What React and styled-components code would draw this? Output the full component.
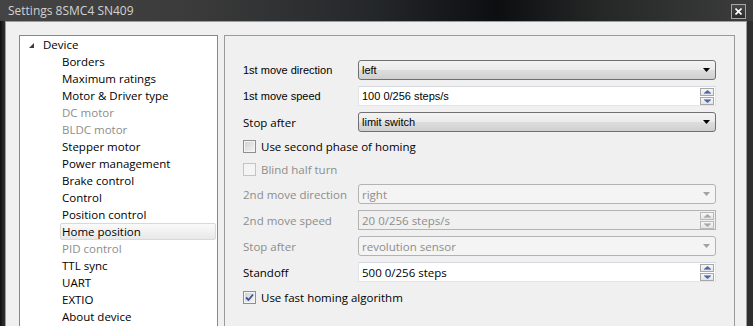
import React from 'react';
import styled, { createGlobalStyle, css } from 'styled-components';

const GlobalStyle = createGlobalStyle`
  html, body {
    margin: 0;
    padding: 0;
    background: #1c1c1c;
  }
  body {
    font-family: "Open Sans", "Noto Sans", sans-serif;
  }
`

const segoe = css`
  font-family: "Open Sans", "Noto Sans", sans-serif;
  font-size: 11.5px;
`

const tahoma = css`
  font-family: "Liberation Sans", Arial, sans-serif;
  font-size: 11px;
`

const Window = styled.div`
  width: 753px;
  height: 326px;
  overflow: hidden;
  display: flex;
  flex-direction: column;
  background: #2c2c2c;
`

const TitleBar = styled.div`
  flex: none;
  height: 21px;
  display: flex;
  align-items: center;
  justify-content: space-between;
  padding: 0 7px 0 8px;
  background: linear-gradient(90deg, #444 0%, #3b3b3b 25%, #24272a 50%, #0c0e10 66%, #262828 80%, #3c3c3c 100%);
  color: #d2d2d2;
  ${segoe};
  font-size: 12px;
`

const CloseButton = styled.div`
  width: 13px;
  height: 13px;
  margin-top: 2px;
  border: 1px solid #a6a6a6;
  background: linear-gradient(#4a4a4a, #2b2b2b);
  display: flex;
  align-items: center;
  justify-content: center;
`

const Frame = styled.div`
  flex: 1;
  min-height: 0;
  display: flex;
  padding: 0 6px 0 5px;
  background: linear-gradient(90deg, #0e0e0e 0px, #262626 3px, #2e2e2e 5px);
`

const Content = styled.div`
  flex: 1;
  min-height: 0;
  display: flex;
  gap: 6px;
  padding: 13px 0 0 13px;
  background: #f0f0f0;
  border: 1px solid #9c9c9c;
  border-bottom: none;
  overflow: hidden;
`

const Tree = styled.div`
  flex: none;
  width: 199px;
  height: 320px;
  box-sizing: border-box;
  border: 1px solid #828790;
  background: #fff;
  padding-right: 1px;
`

const TreeRow = styled.div`
  height: 17px;
  box-sizing: border-box;
  display: flex;
  align-items: center;
  margin-left: ${p => (p.$child ? '40px' : '7px')};
  padding-left: 1px;
  border: 1px solid transparent;
  border-radius: 2px;
  color: ${p => (p.$disabled ? '#8d8d8d' : '#000')};
  white-space: nowrap;
  ${segoe};
  ${p => p.$selected && css`
    border-color: #d9d9d9;
    background: linear-gradient(#fafafa, #e8e8e8);
  `}
`

const Expander = styled.svg`
  width: 5px;
  height: 5px;
  margin: 1px 9px 0 0;
`

const GroupBox = styled.div`
  flex: none;
  width: 511px;
  height: 320px;
  box-sizing: border-box;
  border: 1px solid #9a9a9a;
  padding: 24px 0 0 18px;
  display: flex;
  flex-direction: column;
`

const Field = styled.div`
  display: grid;
  grid-template-columns: 115px 358px;
  align-items: center;
  height: 20px;
  margin-bottom: 6px;
`

const Label = styled.span`
  ${p => (p.$small ? tahoma : segoe)};
  color: ${p => (p.$disabled ? '#8d8d8d' : '#000')};
  white-space: nowrap;
`

const Combo = styled.div`
  height: 20px;
  box-sizing: border-box;
  display: flex;
  align-items: center;
  justify-content: space-between;
  padding: 0 5px 0 3px;
  border-radius: 3px;
  border: 1px solid ${p => (p.$disabled ? '#b3b3b3' : '#707070')};
  background: ${p => (p.$disabled
    ? '#f4f4f4'
    : 'linear-gradient(#f3f3f3 0%, #ebebeb 48%, #dddddd 52%, #cfcfcf 100%)')};
`

const SpinBox = styled.div`
  height: 20px;
  box-sizing: border-box;
  display: flex;
  align-items: center;
  justify-content: space-between;
  padding: 0 1px 0 3px;
  border: 1px solid ${p => (p.$disabled ? '#b3b3b3' : '#e1e4e8')};
  border-top-color: ${p => (p.$disabled ? '#b3b3b3' : '#d6d9dd')};
  background: ${p => (p.$disabled ? '#f0f0f0' : '#fff')};
`

const SpinButtons = styled.div`
  display: flex;
  flex-direction: column;
  gap: 1px;
`

const SpinButton = styled.div`
  width: 12px;
  height: 6px;
  border: 1px solid ${p => (p.$disabled ? '#b8b8b8' : '#a7a7a7')};
  background: linear-gradient(#f7f7f7, #e4e4e4);
  display: flex;
  align-items: center;
  justify-content: center;
`

const CheckRow = styled.label`
  display: flex;
  align-items: center;
  gap: 5px;
  height: 16px;
  margin-bottom: 7px;
  margin-top: ${p => p.$top || 0}px;
`

const Box = styled.span`
  width: 13px;
  height: 13px;
  box-sizing: border-box;
  border: 1px solid ${p => (p.$disabled ? '#c4c4c4' : '#8e8f8f')};
  background: ${p => (p.$disabled ? '#f4f4f4' : 'linear-gradient(135deg, #cfcfcf, #f6f6f6)')};
  box-shadow: inset 0 0 0 1px #f4f4f4;
  display: flex;
  align-items: center;
  justify-content: center;
`

const DownArrow = ({ color }) => (
  <svg width="7" height="4" viewBox="0 0 7 4">
    <polygon points="0,0 7,0 3.5,4" fill={color} />
  </svg>
)

const SmallArrow = ({ up, color }) => (
  <svg width="7" height="4" viewBox="0 0 7 4">
    {up
      ? <polygon points="3.5,0 7,3 0,3" fill={color} />
      : <polygon points="0,1 7,1 3.5,4" fill={color} />}
    <rect x="0" y={up ? 3 : 0} width="7" height="1" fill={color} opacity="0.6" />
  </svg>
)

const treeItems = [
  { text: 'Borders' },
  { text: 'Maximum ratings' },
  { text: 'Motor & Driver type' },
  { text: 'DC motor', disabled: true },
  { text: 'BLDC motor', disabled: true },
  { text: 'Stepper motor' },
  { text: 'Power management' },
  { text: 'Brake control' },
  { text: 'Control' },
  { text: 'Position control' },
  { text: 'Home position', selected: true },
  { text: 'PID control', disabled: true },
  { text: 'TTL sync' },
  { text: 'UART' },
  { text: 'EXTIO' },
  { text: 'About device' },
]

const ComboField = ({ label, value, disabled, smallLabel, small }) => (
  <Field>
    <Label $small={smallLabel} $disabled={disabled}>{label}</Label>
    <Combo $disabled={disabled}>
      <Label $small={small} $disabled={disabled}>{value}</Label>
      <DownArrow color={disabled ? '#a2a2a2' : '#000'} />
    </Combo>
  </Field>
)

const SpinField = ({ label, value, disabled, smallLabel, small }) => {
  const arrow = disabled ? '#a8a8a8' : '#4d66b0'
  return (
    <Field>
      <Label $small={smallLabel} $disabled={disabled}>{label}</Label>
      <SpinBox $disabled={disabled}>
        <Label $small={small} $disabled={disabled}>{value}</Label>
        <SpinButtons>
          <SpinButton $disabled={disabled}><SmallArrow up color={arrow} /></SpinButton>
          <SpinButton $disabled={disabled}><SmallArrow color={arrow} /></SpinButton>
        </SpinButtons>
      </SpinBox>
    </Field>
  )
}

const CheckField = ({ label, checked, disabled, top }) => (
  <CheckRow $top={top}>
    <Box $disabled={disabled}>
      {checked && (
        <svg width="9" height="9" viewBox="0 0 9 9">
          <path d="M1 4.5 L3.5 7 L8 1.5" stroke="#3c5296" strokeWidth="1.8" fill="none" />
        </svg>
      )}
    </Box>
    <Label $disabled={disabled}>{label}</Label>
  </CheckRow>
)

const App = () => (
  <Window>
    <GlobalStyle />
    <TitleBar>
      <span>Settings 8SMC4 SN409</span>
      <CloseButton>
        <svg width="7" height="7" viewBox="0 0 7 7">
          <path d="M0.5 0.5 L6.5 6.5 M6.5 0.5 L0.5 6.5" stroke="#fff" strokeWidth="1.6" />
        </svg>
      </CloseButton>
    </TitleBar>
    <Frame>
      <Content>
        <Tree>
          <TreeRow>
            <Expander viewBox="0 0 5 5">
              <polygon points="5,0 5,5 0,5" fill="#3c3c3c" />
            </Expander>
            Device
          </TreeRow>
          {treeItems.map(item => (
            <TreeRow
              key={item.text}
              $child
              $disabled={item.disabled}
              $selected={item.selected}
            >
              {item.text}
            </TreeRow>
          ))}
        </Tree>
        <GroupBox>
          <ComboField smallLabel small label="1st move direction" value="left" />
          <SpinField smallLabel small label="1st move speed" value="100 0/256 steps/s" />
          <ComboField small label="Stop after" value="limit switch" />
          <CheckField label="Use second phase of homing" />
          <CheckField label="Blind half turn" disabled />
          <ComboField label="2nd move direction" value="right" disabled />
          <SpinField label="2nd move speed" value="20 0/256 steps/s" disabled />
          <ComboField label="Stop after" value="revolution sensor" disabled />
          <SpinField label="Standoff" value="500 0/256 steps" />
          <CheckField label="Use fast homing algorithm" checked top={1} />
        </GroupBox>
      </Content>
    </Frame>
  </Window>
)

export default App;
